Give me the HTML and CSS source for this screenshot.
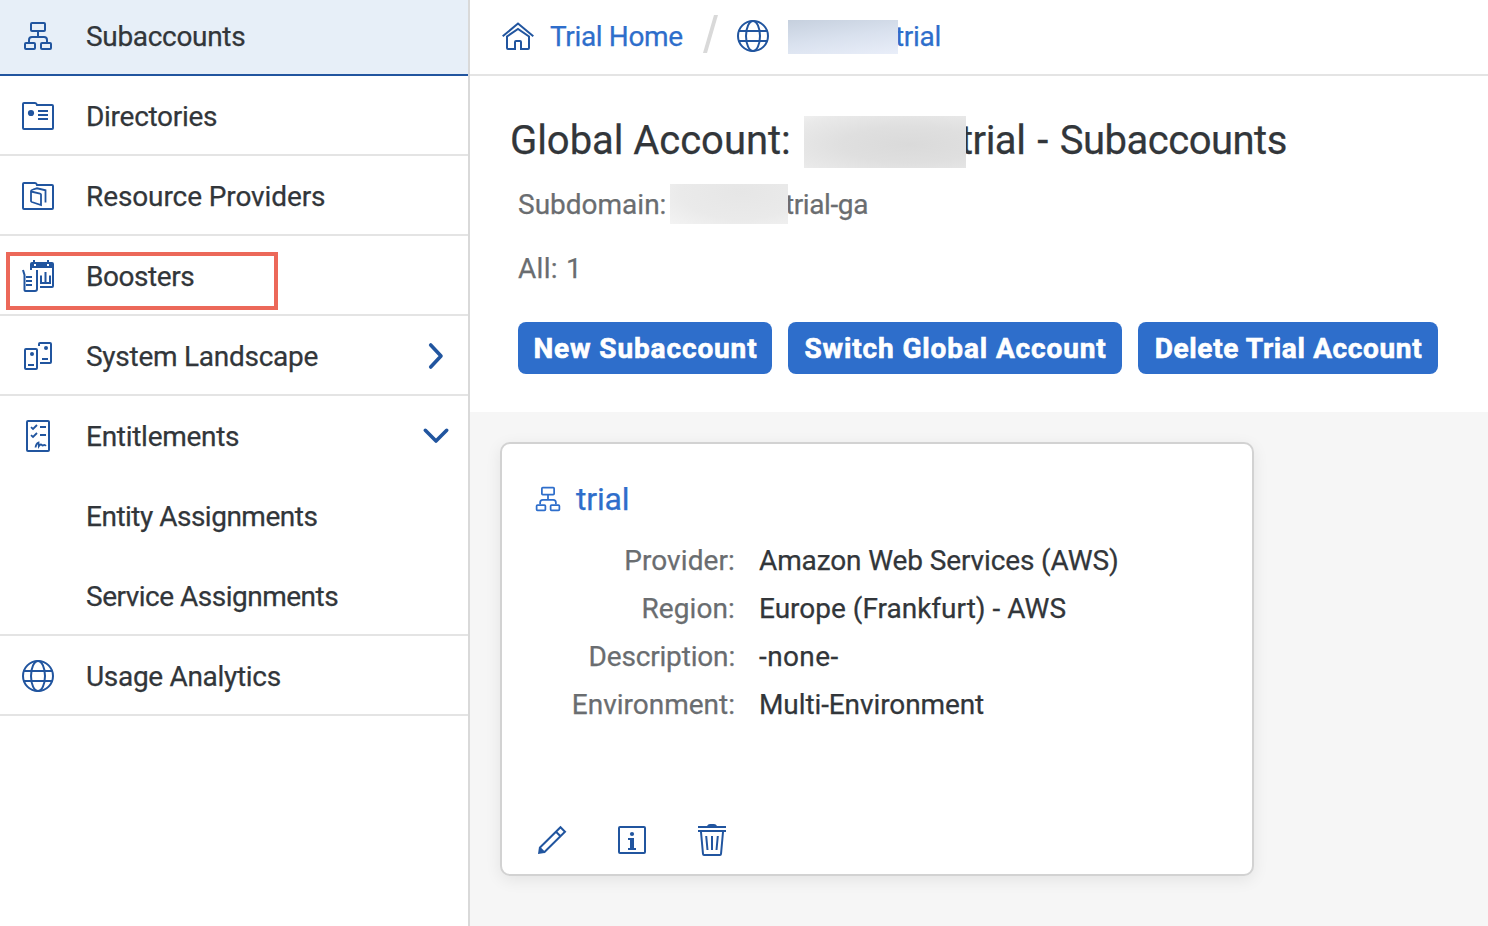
FILE: index.html
```
<!DOCTYPE html>
<html lang="en">
<head>
<meta charset="utf-8">
<title>Global Account - Subaccounts</title>
<link rel="stylesheet" href="styles.css">
</head>
<body>
<svg class="defs" width="0" height="0" aria-hidden="true">
  <symbol id="tree" viewBox="0 0 32 32"><rect x="9" y="3" width="14" height="8" rx="1"/><rect x="3" y="23" width="10" height="6" rx="1"/><rect x="19" y="23" width="10" height="6" rx="1"/><path d="M16 11v6M7 22v-2q0-3 3-3h12q3 0 3 3v2"/></symbol>
  <symbol id="globe" viewBox="0 0 32 32"><circle cx="16" cy="16" r="15"/><ellipse cx="16" cy="16" rx="7" ry="15"/><path d="M2 11h28M2 21h28"/></symbol>
</svg>
<div class="app">
  <nav class="side">
    <a class="item selected"><svg class="icon"><use href="#tree"/></svg><span class="t-subaccounts">Subaccounts</span></a>
    <a class="item"><svg class="icon" viewBox="0 0 32 32"><path d="M2 3h11q1.500 0 2 2h15q1 0 1 1v22q0 1-1 1H2q-1 0-1-1V4q0-1 1-1z"/><circle class="solid" cx="9" cy="13" r="3.100"/><path d="M16 11h10M16 15h10M16 19h10"/></svg><span>Directories</span></a>
    <a class="item"><svg class="icon" viewBox="0 0 32 32"><path d="M2 3h11q1.500 0 2 2h15q1 0 1 1v22q0 1-1 1H2q-1 0-1-1V4q0-1 1-1z"/><path class="fine" d="M9 11.500l9 2q1 .3 1 1v10.500l-9.200-3q-.8-.3-.8-1zM9 11.500q0-1.500 2-2l4-1.200 8.500 2v12.200"/></svg><span class="t-resource">Resource Providers</span></a>
    <a class="item marked"><svg class="icon" viewBox="0 0 32 32"><path class="solid" fill-rule="evenodd" d="M8 10V4q0-2 2-2h1V0h2v2h12V0h2v2h3q2 0 2 2v4H10v2zM12 4v2h2V4zM25 4v2h2V4z"/><path d="M31 7v19q0 1-1 1H18M1 10l1.500 5v15q0 1 1 1H13q2 0 2-2V10M4 17h6M4 21h6M4 25h6M19 15.500V23h9v-7.500M23.500 12v11"/></svg><span class="t-boosters">Boosters</span></a>
    <a class="item"><svg class="icon" viewBox="0 0 32 32"><rect x="3" y="9" width="12" height="20" rx="1"/><path d="M17 6V4q0-1 1-1h10q1 0 1 1v18q0 1-1 1H18M6 25h6M20 19h6"/><circle class="solid" cx="10" cy="14" r="2"/><circle class="solid" cx="24" cy="8" r="2"/></svg><span class="t-system">System Landscape</span><svg class="arrow" viewBox="0 0 32 32"><path d="M10.700 5L21 16 10.700 27"/></svg></a>
    <div class="group">
      <a class="item"><svg class="icon" viewBox="0 0 32 32"><rect x="5" y="1" width="22" height="30" rx="1"/><path d="M18 7h6M18 15h6"/><path class="fine" d="M9 7.200l2 1.800 4-4M9 15.200l2 1.800 4-4"/><path class="fine" d="M13.500 27.500q.5-4 3-5l.3 3.800q1.700-2.600 3-1.400.8 1 2 .2 1.200-.6 2 .9"/></svg><span>Entitlements</span><svg class="arrow" viewBox="0 0 32 32"><path d="M5.300 10.300L16 21 26.700 10.300"/></svg></a>
      <a class="item sub"><span class="t-assign">Entity Assignments</span></a>
      <a class="item sub"><span class="t-assign">Service Assignments</span></a>
    </div>
    <a class="item"><svg class="icon"><use href="#globe"/></svg><span class="t-usage">Usage Analytics</span></a>
  </nav>
  <main class="main">
    <header class="crumbs">
      <svg class="icon" viewBox="0 0 32 32"><path d="M.7 16.300L16 3.500l15.300 12.800M5 16.500V28q0 1 1 1h7v-7q0-1 1-1h4q1 0 1 1v7h7q1 0 1-1V16.500L16 9z"/></svg>
      <a class="home">Trial Home</a>
      <svg class="slash" viewBox="0 0 16 38"><path d="M11 0h4L4 38H0z"/></svg>
      <svg class="icon"><use href="#globe"/></svg>
      <span class="mask mask-crumb"></span><a class="crumb-name">trial</a>
    </header>
    <section class="head">
      <h1 class="title"><span>Global Account:</span><span class="mask mask-title"></span><span class="title-end">trial - Subaccounts</span></h1>
      <p class="domain"><span>Subdomain:</span><span class="mask mask-domain"></span><span class="domain-end">trial-ga</span></p>
      <p class="all">All: 1</p>
      <div class="actions">
        <button class="btn new">New Subaccount</button>
        <button class="btn switch">Switch Global Account</button>
        <button class="btn delete">Delete Trial Account</button>
      </div>
    </section>
    <section class="content">
      <article class="card">
        <h2 class="name"><svg><use href="#tree"/></svg><span>trial</span></h2>
        <dl class="facts">
          <dt class="t-provider">Provider:</dt><dd class="t-aws">Amazon Web Services (AWS)</dd>
          <dt class="t-region">Region:</dt><dd>Europe (Frankfurt) - AWS</dd>
          <dt class="t-desc">Description:</dt><dd class="t-none">-none-</dd>
          <dt>Environment:</dt><dd class="t-multi">Multi-Environment</dd>
        </dl>
        <div class="tools">
          <svg class="icon" viewBox="0 0 32 32"><path d="M3.500 24L24.500 3.200l4.500 4.500L8 28.500M20 7.700l4.500 4.500"/><path class="solid" d="M2 30l1-7 1.800.5 4.500 4.500-.8 1z"/></svg>
          <svg class="icon" viewBox="0 0 32 32"><rect x="3" y="3" width="26" height="26" rx="1"/><circle class="solid" cx="16" cy="10" r="2.100"/><path class="solid" d="M12 14h6v10h2v2h-8v-2h2v-8h-2z"/></svg>
          <svg class="icon" viewBox="0 0 32 32"><path d="M2 3h28M2 7h28M5 8l2 22q.1 1 1 1h16q.9 0 1-1l2-22M10.200 12l1.300 14M16 12v14M21.800 12l-1.300 14"/><path class="solid" d="M11 2q1-2 3-2h4q2 0 3 2z"/></svg>
        </div>
      </article>
    </section>
  </main>
</div>
</body>
</html>
```
FILE: styles.css
```
*, *::after { box-sizing: border-box; }
body, h1, h2, p, dl, dd { margin: 0; }
body {
  background: #fff;
  color: #32363a;
  font: 28px/32px Roboto, "Liberation Sans", sans-serif;
  -webkit-text-stroke: .25px;
}
.defs { position: absolute; }
.app { display: flex; height: 926px; overflow: hidden; }

svg { flex: none; fill: none; stroke: #21559f; stroke-width: 2; }
.icon { width: 32px; height: 32px; }
.solid { fill: #21559f; stroke: none; }
.fine { stroke-width: 1.8; }

/* Side navigation */
.side { width: 470px; flex: none; border-right: 2px solid #d9d9d9; letter-spacing: -.28px; }
.item {
  display: flex;
  align-items: center;
  gap: 32px;
  height: 80px;
  padding: 2px 16px 0 22px;
  border-bottom: 2px solid #e4e4e4;
  white-space: nowrap;
}
.item span { padding-top: 2px; }
.item.selected { height: 76px; padding: 0 16px 2px 22px; background: #e7eff8; border-color: #21559f; }
.group { border-bottom: 2px solid #e4e4e4; height: 240px; }
.group .item { border-bottom: 0; }
.group .item { padding-bottom: 2px; }
.item.sub { padding-left: 86px; }
.arrow { width: 32px; height: 32px; margin-left: auto; stroke-width: 3.6; stroke-linecap: round; stroke-linejoin: round; }
.marked { position: relative; }
.marked::after {
  content: "";
  position: absolute;
  left: 6px;
  top: 16px;
  width: 272px;
  height: 58px;
  border: 4px solid #ec6859;
}
.t-subaccounts { letter-spacing: -.32px; }
.t-resource { letter-spacing: -.1px; }
.t-boosters { letter-spacing: -.45px; }
.t-system { letter-spacing: -.26px; }
.t-assign { letter-spacing: -.5px; }
.t-usage { letter-spacing: -.31px; }

/* Breadcrumb bar */
.main { flex: 1; display: flex; flex-direction: column; min-width: 0; }
.crumbs {
  display: flex;
  align-items: center;
  height: 76px;
  padding: 0 0 2px 32px;
  border-bottom: 2px solid #e4e4e4;
  color: #2e6ecb;
}
.home { width: 153px; margin-left: 16px; padding-top: 2px; letter-spacing: -.36px; }
.slash { width: 16px; height: 38px; margin: 0 18px 0 0; fill: #d9d9d9; stroke: none; position: relative; top: -2px; }
.mask { flex: none; }
.mask-crumb { width: 110px; height: 34px; margin: 2px 0 0 19px; background: linear-gradient(172deg, #c6d0de, #d9e1ee 50%, #e9eef9); }
.crumb-name { margin-left: -3px; padding-top: 2px; letter-spacing: -.3px; clip-path: inset(0 0 0 3px); }

/* Page header */
.head { height: 336px; padding: 40px 0 0 48px; color: #6a6d70; }
.title {
  display: flex;
  align-items: center;
  height: 52px;
  margin-left: -8px;
  color: #32363a;
  font-size: 40px;
  font-weight: 400;
  white-space: nowrap;
}
.title > :first-child { width: 294px; margin-top: -2px; letter-spacing: -.05px; }
.mask-title { width: 162px; height: 52px; background: radial-gradient(ellipse at 65% 55%, #dadada, #dfdfdf 45%, #e9e9e9 85%, #efefef); }
.title-end { margin: -2px 0 0 -6px; letter-spacing: -.5px; word-spacing: 2.5px; clip-path: inset(-8px 0 -8px 6px); }
.domain { display: flex; align-items: center; height: 40px; margin-top: 16px; }
.domain > span:not(.mask) { padding-top: 2px; }
.domain > :first-child { width: 152px; }
.mask-domain { width: 118px; height: 40px; background: radial-gradient(ellipse at 60% 20%, #e6e6e6, #eaeaea 60%, #f3f3f3); }
.domain-end { margin-left: -3px; letter-spacing: -.4px; clip-path: inset(0 0 0 3px); }
.all { margin-top: 29px; letter-spacing: .3px; word-spacing: 1px; }
.actions { display: flex; gap: 16px; margin-top: 37px; }
.btn {
  height: 52px;
  padding: 2px 0 0;
  border: 0;
  border-radius: 8px;
  background: #2e6ecb;
  color: #fff;
  font: 700 28px/50px Roboto, "Liberation Sans", sans-serif;
  white-space: nowrap;
  -webkit-text-stroke: .6px;
}
.new { width: 254px; letter-spacing: .87px; text-indent: 1px; }
.switch { width: 334px; letter-spacing: .87px; text-indent: 1px; }
.delete { width: 300px; letter-spacing: .64px; text-indent: 1px; }

/* Subaccount tile */
.content { flex: 1; padding: 30px; background: #f6f6f6; }
.card {
  width: 754px;
  height: 434px;
  padding: 37px 32px 0;
  border: 2px solid #d2d2d2;
  border-radius: 10px;
  background: #fff;
  box-shadow: 0 4px 16px rgba(0, 0, 0, .08);
}
.name { display: flex; align-items: center; gap: 14px; height: 36px; color: #2e6ecb; font-size: 32px; font-weight: 400; letter-spacing: -.2px; }
.name svg { width: 28px; height: 28px; stroke: #2e6ecb; }
.facts { display: grid; grid-template-columns: 201px 1fr; column-gap: 24px; line-height: 48px; margin-top: 20px; }
dt { color: #6a6d70; text-align: right; }
.t-provider { letter-spacing: .1px; }
.t-region { letter-spacing: .1px; }
.t-desc { letter-spacing: -.17px; }
.t-none { letter-spacing: .4px; }
.t-aws { letter-spacing: -.12px; }
.t-multi { letter-spacing: -.1px; }
.tools { display: flex; gap: 48px; margin-top: 95px; padding-left: 2px; }
```
